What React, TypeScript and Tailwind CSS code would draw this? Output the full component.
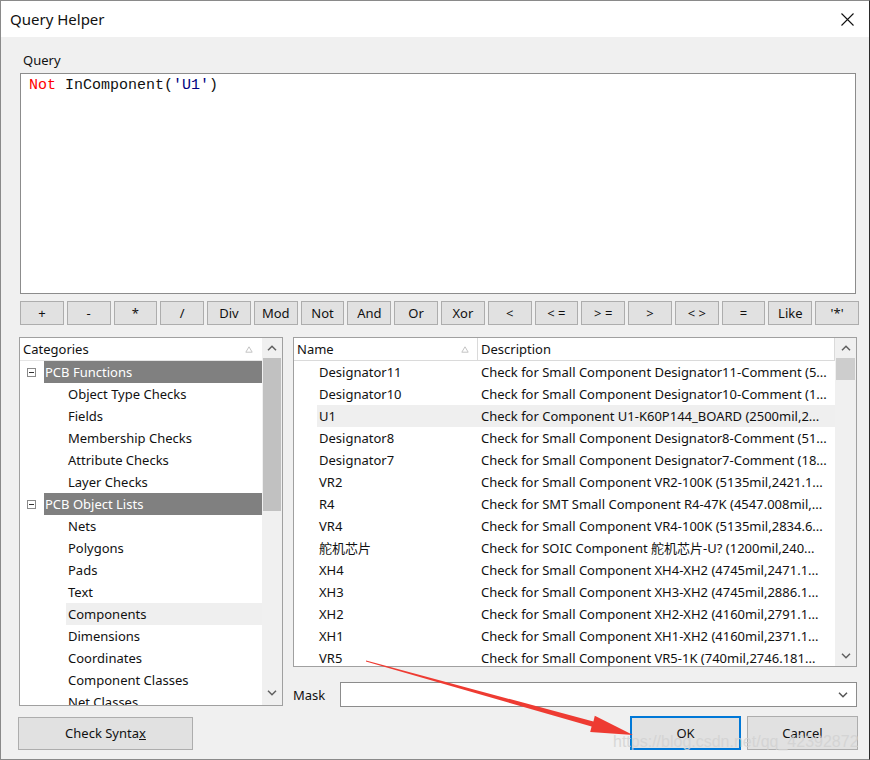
import React from "react";

const rows: [string, string][] = [
  ["Designator11", "Check for Small Component Designator11-Comment (5..."],
  ["Designator10", "Check for Small Component Designator10-Comment (1..."],
  ["U1", "Check for Component U1-K60P144_BOARD (2500mil,2..."],
  ["Designator8", "Check for Small Component Designator8-Comment (51..."],
  ["Designator7", "Check for Small Component Designator7-Comment (18..."],
  ["VR2", "Check for Small Component VR2-100K (5135mil,2421.1..."],
  ["R4", "Check for SMT Small Component R4-47K (4547.008mil,..."],
  ["VR4", "Check for Small Component VR4-100K (5135mil,2834.6..."],
  ["舵机芯片", "Check for SOIC Component 舵机芯片-U? (1200mil,240..."],
  ["XH4", "Check for Small Component XH4-XH2 (4745mil,2471.1..."],
  ["XH3", "Check for Small Component XH3-XH2 (4745mil,2886.1..."],
  ["XH2", "Check for Small Component XH2-XH2 (4160mil,2791.1..."],
  ["XH1", "Check for Small Component XH1-XH2 (4160mil,2371.1..."],
  ["VR5", "Check for Small Component VR5-1K (740mil,2746.181..."],
];

const ops = ["+", "-", "*", "/", "Div", "Mod", "Not", "And", "Or", "Xor", "<", "< =", "> =", ">", "< >", "=", "Like", "'*'"];

type TreeItem = { label: string; header?: boolean; selected?: boolean };
const tree: TreeItem[] = [
  { label: "PCB Functions", header: true },
  { label: "Object Type Checks" },
  { label: "Fields" },
  { label: "Membership Checks" },
  { label: "Attribute Checks" },
  { label: "Layer Checks" },
  { label: "PCB Object Lists", header: true },
  { label: "Nets" },
  { label: "Polygons" },
  { label: "Pads" },
  { label: "Text" },
  { label: "Components", selected: true },
  { label: "Dimensions" },
  { label: "Coordinates" },
  { label: "Component Classes" },
  { label: "Net Classes" },
];

function ChevronUp() {
  return (
    <svg width="10" height="6" viewBox="0 0 10 6">
      <path d="M1 5.2 L5 1.2 L9 5.2" fill="none" stroke="#606060" strokeWidth="1.5" />
    </svg>
  );
}
function ChevronDown({ color = "#606060" }: { color?: string }) {
  return (
    <svg width="10" height="6" viewBox="0 0 10 6">
      <path d="M1 0.8 L5 4.8 L9 0.8" fill="none" stroke={color} strokeWidth="1.5" />
    </svg>
  );
}
function SortTri() {
  return (
    <svg width="8" height="7" viewBox="0 0 8 7">
      <path d="M4 0.8 L7.2 6.2 L0.8 6.2 Z" fill="none" stroke="#c4c4c4" strokeWidth="1" />
    </svg>
  );
}
function MinusBox() {
  return (
    <svg width="9" height="9" viewBox="0 0 9 9">
      <rect x="0.5" y="0.5" width="8" height="8" fill="white" stroke="#8a8a8a" />
      <line x1="2" y1="4.5" x2="7" y2="4.5" stroke="#333" />
    </svg>
  );
}

export default function App() {
  return (
    <div className="relative w-[870px] h-[760px] overflow-hidden bg-[#f0f0f0] border border-[#8a8a8a] border-r-[#2a2a2a] font-['Noto_Sans','Noto_Sans_CJK_SC',sans-serif] text-[13px] text-black">
      {/* title bar */}
      <div className="h-[36px] bg-white flex items-center justify-between pl-[9px] pr-[15px]">
        <span className="text-[15px] leading-[20px] text-[#111]">Query Helper</span>
        <svg width="13" height="13" viewBox="0 0 13 13">
          <path d="M0.5 0.5 L12.5 12.5 M12.5 0.5 L0.5 12.5" stroke="#111" strokeWidth="1.1" />
        </svg>
      </div>

      <div className="pl-[19px] pr-[11px]">
        <div className="mt-[14px] h-[18px] leading-[18px] pl-[3px] text-[#111]">Query</div>

        {/* query box */}
        <div className="mt-[4px] w-[836px] h-[221px] bg-white border border-[#8c8c8c] pl-[8px] pt-[2px] font-['Liberation_Mono',monospace] text-[15px] leading-[20px] whitespace-pre">
          <span className="text-[#ff0000]">Not</span>
          <span className="text-[#111]"> InComponent(</span>
          <span className="text-[#000080]">'U1'</span>
          <span className="text-[#111]">)</span>
        </div>

        {/* operator buttons */}
        <div className="mt-[7px] w-[839px] grid grid-cols-[repeat(18,minmax(0,1fr))] gap-x-[3px]">
          {ops.map((o) => (
            <div
              key={o}
              className="h-[24px] bg-[#e1e1e1] border border-[#adadad] flex items-center justify-center leading-[20px] text-[#111]"
            >
              {o}
            </div>
          ))}
        </div>

        {/* panels */}
        <div className="mt-[12px] flex">
          {/* categories */}
          <div className="ml-[-1px] w-[264px] h-[369px] bg-white border border-[#a0a0a0] flex overflow-hidden">
            <div className="flex-1 flex flex-col overflow-hidden">
              <div className="h-[23px] shrink-0 flex items-center justify-between pl-[3px] pr-[9px] border-b border-[#e5e5e5]">
                <span className="leading-[20px] text-[#111]">Categories</span>
                <SortTri />
              </div>
              {tree.map((t) =>
                t.header ? (
                  <div key={t.label} className="h-[22px] shrink-0 flex items-center">
                    <div className="w-[24px] flex justify-end pr-[8px]">
                      <MinusBox />
                    </div>
                    <div className="flex-1 h-full bg-[#808080] text-white pl-[1px] leading-[22px]">{t.label}</div>
                  </div>
                ) : (
                  <div key={t.label} className="h-[22px] shrink-0 flex">
                    <div
                      className={`ml-[46px] flex-1 h-full pl-[2px] leading-[22px] text-[#111] ${t.selected ? "bg-[#efefef]" : ""}`}
                    >
                      {t.label}
                    </div>
                  </div>
                )
              )}
            </div>
            <div className="w-[20px] bg-[#f0f0f0] flex flex-col">
              <div className="h-[20px] flex items-center justify-center">
                <ChevronUp />
              </div>
              <div className="mx-[1px] h-[153px] bg-[#c1c1c1]" />
              <div className="flex-1" />
              <div className="h-[24px] flex items-center justify-center">
                <ChevronDown />
              </div>
            </div>
          </div>

          {/* right side */}
          <div className="ml-[10px] w-[564px] flex flex-col">
            <div className="h-[330px] bg-white border border-[#a0a0a0] flex overflow-hidden">
              <div className="flex-1 flex flex-col overflow-hidden">
                <div className="h-[23px] shrink-0 flex border-b border-r border-[#dadada]">
                  <div className="w-[184px] flex items-center justify-between pl-[3px] pr-[8px] border-r border-[#dadada]">
                    <span className="leading-[20px] text-[#111]">Name</span>
                    <SortTri />
                  </div>
                  <div className="flex items-center pl-[3px] leading-[20px] text-[#111]">Description</div>
                </div>
                {rows.map(([n, d], i) => (
                  <div key={n} className="h-[22px] shrink-0 flex">
                    <div className={`ml-[23px] flex-1 flex h-full leading-[22px] text-[#111] ${i === 2 ? "bg-[#efefef]" : ""}`}>
                      <div className="w-[163px] pl-[2px] whitespace-nowrap overflow-hidden">{n}</div>
                      <div className="flex-1 pl-[1px] whitespace-nowrap overflow-hidden">{d}</div>
                    </div>
                  </div>
                ))}
              </div>
              <div className="w-[21px] bg-[#f0f0f0] flex flex-col">
                <div className="h-[20px] flex items-center justify-center">
                  <ChevronUp />
                </div>
                <div className="mx-[1px] h-[22px] bg-[#cdcdcd]" />
                <div className="flex-1" />
                <div className="h-[20px] flex items-center justify-center">
                  <ChevronDown />
                </div>
              </div>
            </div>

            <div className="mt-[15px] flex items-center">
              <span className="w-[47px] leading-[20px] text-[#111]">Mask</span>
              <div className="flex-1 h-[25px] bg-white border border-[#8c8c8c] flex items-center justify-end pr-[8px]">
                <ChevronDown color="#555" />
              </div>
            </div>
          </div>
        </div>

        {/* bottom buttons */}
        <div className="mt-[9px] flex items-center">
          <div className="ml-[-2px] w-[175px] h-[33px] bg-[#e1e1e1] border border-[#adadad] flex items-center justify-center leading-[20px] text-[#111]">
            <span>
              Check Synta<span className="underline">x</span>
            </span>
          </div>
          <div className="ml-auto flex gap-[6px]">
            <div className="w-[111px] h-[34px] bg-[#e1e1e1] border-2 border-[#0078d7] flex items-center justify-center leading-[20px] text-[#111]">
              OK
            </div>
            <div className="w-[111px] h-[34px] bg-[#e1e1e1] border border-[#adadad] flex items-center justify-center leading-[20px] text-[#111]">
              Cancel
            </div>
          </div>
        </div>
      </div>

      {/* watermark */}
      <div className="absolute left-[612px] top-[730px] font-['Liberation_Sans',sans-serif] text-[16px] leading-[22px] text-[#d2d2d2] opacity-80 pointer-events-none whitespace-nowrap">
        https://blog.csdn.net/qq_42392872
      </div>

      {/* red annotation arrow */}
      <svg className="absolute left-0 top-0 pointer-events-none" width="870" height="760" viewBox="0 0 870 760">
        <polygon
          points="365.1,659.4 592.4,720.6 593.8,714.8 632,734 589.2,731 590.6,725.4 364.9,660.6"
          fill="#ee3b32"
        />
      </svg>
    </div>
  );
}
